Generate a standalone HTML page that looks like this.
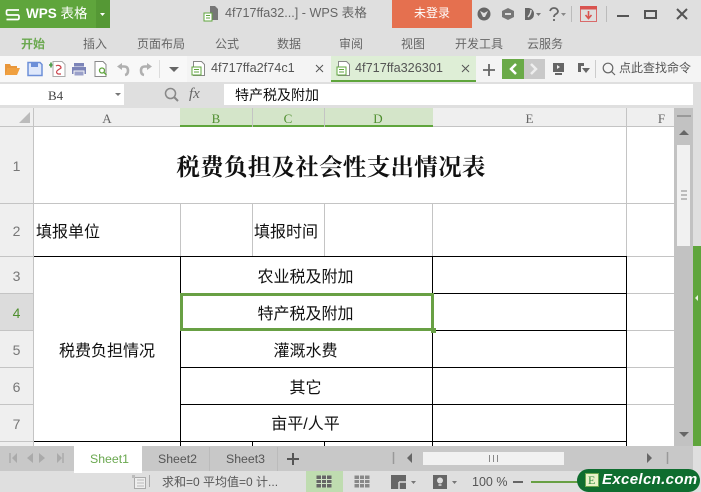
<!DOCTYPE html>
<html><head><meta charset="utf-8"><style>
html,body{margin:0;padding:0}
#p{position:relative;width:701px;height:492px;overflow:hidden;background:#dfdfdf;font-family:"Liberation Sans","Noto Sans CJK SC",sans-serif;font-size:12px;color:#555}
#p div{position:absolute}
.t{white-space:nowrap;line-height:1}
.s{white-space:nowrap;line-height:1;font-size:16px;color:#111;font-family:"Liberation Sans","WenQuanYi Zen Hei",sans-serif}
.h{white-space:nowrap;line-height:1;text-align:center;font-size:13px;color:#666;font-family:"Liberation Serif",serif}
.n{white-space:nowrap;line-height:1;text-align:center;font-size:14px;color:#777;left:0;width:33px}
svg{position:absolute;overflow:visible}
.k{background:#000}.g{background:#c4c4c4}
</style></head><body><div id="p">
<!-- title bar -->
<div style="left:0;top:0;width:96px;height:28px;background:#5fa53c"></div>
<div style="left:96px;top:0;width:14px;height:28px;background:#559835"></div>
<svg style="left:0;top:0" width="110" height="28"><path d="M19 10H8Q6.500 10 6.500 11.500V13.500Q6.500 15 8 15H17.500Q19 15 19 16.500V18Q19 19.500 17.500 19.500H6.500" fill="none" stroke="#fff" stroke-width="1.700"/><path d="M100 13h5l-2.500 3z" fill="#fff"/></svg>
<div class="t" style="left:26px;top:7px;font-size:13.500px;color:#fff;font-weight:bold">WPS <span style="font-weight:normal">表格</span></div>
<svg style="left:203px;top:5px" width="16" height="17"><path d="M7 1h5l3 3v11H7z" fill="#777"/><rect x="1" y="8" width="8" height="8" fill="#fff" stroke="#5fa53c"/><path d="M3 10.500h4M3 13h4" stroke="#5fa53c"/></svg>
<div class="t" style="left:225px;top:7px;font-size:12.600px;color:#666">4f717ffa32...] - WPS 表格</div>
<div style="left:392px;top:0;width:80px;height:28px;background:#e5704f"></div>
<div class="t" style="left:414px;top:7px;font-size:12px;color:#fff">未登录</div>
<svg style="left:470px;top:0" width="231" height="28"><circle cx="14" cy="14" r="6.500" fill="#666"/><path d="M10 11l4 2 4-2-3 6h-2z" fill="#ddd"/><path d="M38 8l6 3v6l-6 3-6-3v-6z" fill="#777"/><path d="M35 14h6" stroke="#ddd" stroke-width="2"/><path d="M55 8h4q5 1 5 6t-5 6h-4z" fill="#666"/><path d="M58 17q3-3 3-7" stroke="#ddd" fill="none" stroke-width="1.500"/><path d="M66 13h5l-2.500 3z" fill="#777"/><path d="M80 11q1-3 4-3t4 3q0 2-2 3t-2 3M84 19v2" fill="none" stroke="#666" stroke-width="1.800"/><path d="M91 13h5l-2.500 3z" fill="#888"/><path d="M101.500 6v16M136.500 6v16" stroke="#bbb"/><rect x="110.500" y="6.500" width="16" height="15" fill="none" stroke="#d96a6a"/><rect x="110" y="6" width="17" height="3.500" fill="#d9534f"/><path d="M118.500 11v7M115.500 15l3 3.500 3-3.500" fill="none" stroke="#d9534f" stroke-width="1.600"/><path d="M147 16h12" stroke="#555" stroke-width="2"/><rect x="175" y="11" width="11" height="7" fill="none" stroke="#555" stroke-width="2"/><path d="M207 9l10 10M217 9l-10 10" stroke="#555" stroke-width="2"/></svg>
<!-- menu -->
<div class="t" style="left:21px;top:38px;color:#6aa84f;font-weight:bold">开始</div>
<div class="t" style="left:83px;top:38px;color:#666">插入</div>
<div class="t" style="left:137px;top:38px;color:#666">页面布局</div>
<div class="t" style="left:215px;top:38px;color:#666">公式</div>
<div class="t" style="left:277px;top:38px;color:#666">数据</div>
<div class="t" style="left:339px;top:38px;color:#666">审阅</div>
<div class="t" style="left:401px;top:38px;color:#666">视图</div>
<div class="t" style="left:455px;top:38px;color:#666">开发工具</div>
<div class="t" style="left:527px;top:38px;color:#666">云服务</div>
<!-- toolbar -->
<div style="left:0;top:56px;width:701px;height:26px;background:#f4f4f4"></div>
<div style="left:0;top:56px;width:187px;height:26px;background:#f8f8f8"></div>
<svg style="left:0;top:56px" width="187" height="26"><path d="M5 8h5l1 2h6v2H8l-3 8z" fill="#e8963a"/><path d="M8 12h12l-3 7H5z" fill="#f0a040"/><path d="M28 6.500h12l2 2v11H28z" fill="#dfe8fb" stroke="#6d8fd8" stroke-width="1.500"/><rect x="31" y="7" width="7" height="4" fill="#6d8fd8"/><path d="M49 9h5M51 6.500v5" stroke="#4a9a45" stroke-width="1.600"/><path d="M53 5.500h9l3 3v12H53z" fill="#fff" stroke="#aaa"/><path d="M56 10a3 2.500 0 0 1 5 2l-3 2q-3 2 0 4h3" fill="none" stroke="#c9424a" stroke-width="1.200"/><rect x="72" y="11" width="14" height="7" fill="#7c84b8"/><rect x="74" y="7" width="10" height="3.500" fill="#7c84b8"/><rect x="74" y="15" width="10" height="5" fill="#9aa0c9" stroke="#f8f8f8"/><path d="M95 5.500h8l3 3v12H95z" fill="#fff" stroke="#888"/><circle cx="102" cy="14.500" r="2.500" fill="none" stroke="#5fa53c" stroke-width="1.300"/><path d="M104 16.500l2.500 2.500" stroke="#5fa53c" stroke-width="1.300"/><path d="M119 10.500h5q4 0 4 4T125 19" fill="none" stroke="#b0b0b0" stroke-width="2.600"/><path d="M122 7l-5 3.500 5 3.500z" fill="#b0b0b0"/><path d="M150 10.500h-5q-4 0-4 4t3 4.500" fill="none" stroke="#b0b0b0" stroke-width="2.600"/><path d="M147 7l5 3.500-5 3.500z" fill="#b0b0b0"/><path d="M159.500 4v18" stroke="#ddd"/><path d="M169 11h10l-5 5z" fill="#666"/></svg>
<svg style="left:191px;top:60px" width="16" height="17"><path d="M2.500 1.500h8l3 3v11h-11z" fill="#fff" stroke="#888"/><rect x="1" y="7" width="9" height="8" fill="#fff" stroke="#5fa53c"/><path d="M3 9.500h5M3 12h5" stroke="#5fa53c"/></svg>
<div class="t" style="left:211px;top:62px;font-size:12.700px;color:#555">4f717ffa2f74c1</div>
<svg style="left:315px;top:64px" width="10" height="10"><path d="M1 1l7 7M8 1l-7 7" stroke="#555"/></svg>
<div style="left:331px;top:56px;width:145px;height:26px;background:#deeed6"></div>
<div style="left:331px;top:80px;width:145px;height:2px;background:#5fa53c"></div>
<svg style="left:336px;top:60px" width="16" height="17"><path d="M2.500 1.500h8l3 3v11h-11z" fill="#fff" stroke="#888"/><rect x="1" y="7" width="9" height="8" fill="#fff" stroke="#5fa53c"/><path d="M3 9.500h5M3 12h5" stroke="#5fa53c"/></svg>
<div class="t" style="left:355px;top:62px;font-size:12.700px;color:#555">4f717ffa326301</div>
<svg style="left:461px;top:64px" width="10" height="10"><path d="M1 1l7 7M8 1l-7 7" stroke="#555"/></svg>
<svg style="left:476px;top:56px" width="225" height="26"><path d="M7 14h12M13 8v12" stroke="#666" stroke-width="1.800"/><rect x="26" y="3" width="22" height="20" fill="#6aaa48"/><rect x="48" y="3" width="21" height="20" fill="#c9c9c9"/><path d="M40 8l-5 5 5 5" fill="none" stroke="#fff" stroke-width="2.500"/><path d="M55 8l5 5-5 5" fill="none" stroke="#eee" stroke-width="2.500"/><rect x="77" y="7" width="11" height="9" fill="#666"/><path d="M81 9l3 2-3 2z" fill="#eee"/><path d="M79 18h7" stroke="#666" stroke-width="2"/><path d="M102 7h6v3h-3v6h-3z" fill="#666"/><path d="M106 12h8l-4 5z" fill="#666"/><path d="M119.500 4v18" stroke="#ccc"/><circle cx="132" cy="12" r="4.800" fill="none" stroke="#666" stroke-width="1.200"/><path d="M135.500 15.500l3.500 3.500" stroke="#666" stroke-width="1.200"/></svg>
<div class="t" style="left:619px;top:62px;font-size:12px;color:#555">点此查找命令</div>
<!-- formula bar -->
<div style="left:0;top:84px;width:124px;height:21px;background:#fff"></div>
<div class="t" style="left:48px;top:89px;font-size:13px;color:#444;font-family:'Liberation Serif',serif">B4</div>
<svg style="left:115px;top:93px" width="7" height="5"><path d="M0 0h6l-3 3z" fill="#777"/></svg>
<svg style="left:164px;top:87px" width="16" height="16"><circle cx="6.500" cy="6.500" r="5" fill="none" stroke="#888" stroke-width="1.500"/><path d="M10 10l4 4" stroke="#888" stroke-width="2"/></svg>
<div class="t" style="left:189px;top:87px;font-size:15px;font-style:italic;color:#666;font-family:'Liberation Serif',serif">fx</div>
<div style="left:224px;top:84px;width:469px;height:21px;background:#fff"></div>
<div class="s" style="left:235px;top:88px;font-size:14px">特产税及附加</div>
<!-- sheet -->
<div style="left:0;top:108px;width:674px;height:338px;background:#fff"></div>
<div style="left:0;top:108px;width:674px;height:19px;background:#efefef"></div>
<div style="left:0;top:108px;width:33px;height:338px;background:#efefef"></div>
<div style="left:180px;top:108px;width:253px;height:19px;background:#d4e5c9"></div>
<div style="left:0;top:293px;width:33px;height:37px;background:#dcdcdc"></div>
<div class="g" style="left:0;top:126px;width:674px;height:1px"></div>
<div style="left:180px;top:125px;width:253px;height:2px;background:#5fa53c"></div>
<div class="g" style="left:33px;top:108px;width:1px;height:338px"></div>
<div class="g" style="left:252px;top:108px;width:1px;height:19px"></div>
<div class="g" style="left:324px;top:108px;width:1px;height:19px"></div>
<div class="g" style="left:626px;top:108px;width:1px;height:149px"></div>
<div class="g" style="left:34px;top:203px;width:640px;height:1px"></div>
<div class="g" style="left:180px;top:204px;width:1px;height:52px"></div>
<div class="g" style="left:252px;top:204px;width:1px;height:52px"></div>
<div class="g" style="left:324px;top:204px;width:1px;height:52px"></div>
<div class="g" style="left:432px;top:204px;width:1px;height:52px"></div>
<div class="g" style="left:627px;top:256px;width:47px;height:1px"></div>
<div class="g" style="left:627px;top:293px;width:47px;height:1px"></div>
<div class="g" style="left:627px;top:330px;width:47px;height:1px"></div>
<div class="g" style="left:627px;top:367px;width:47px;height:1px"></div>
<div class="g" style="left:627px;top:404px;width:47px;height:1px"></div>
<div class="g" style="left:0;top:203px;width:33px;height:1px"></div>
<div class="g" style="left:0;top:256px;width:33px;height:1px"></div>
<div class="g" style="left:0;top:293px;width:33px;height:1px"></div>
<div class="g" style="left:0;top:330px;width:33px;height:1px"></div>
<div class="g" style="left:0;top:367px;width:33px;height:1px"></div>
<div class="g" style="left:0;top:404px;width:33px;height:1px"></div>
<div class="g" style="left:0;top:441px;width:33px;height:1px"></div>
<svg style="left:19px;top:112px" width="12" height="12"><path d="M11 0v11H0z" fill="#bbb"/></svg>
<!-- black borders -->
<div class="k" style="left:34px;top:256px;width:593px;height:1px"></div>
<div class="k" style="left:180px;top:293px;width:447px;height:1px"></div>
<div class="k" style="left:180px;top:330px;width:447px;height:1px"></div>
<div class="k" style="left:180px;top:367px;width:447px;height:1px"></div>
<div class="k" style="left:180px;top:404px;width:447px;height:1px"></div>
<div class="k" style="left:34px;top:441px;width:593px;height:1px"></div>
<div class="k" style="left:180px;top:256px;width:1px;height:190px"></div>
<div class="k" style="left:432px;top:256px;width:1px;height:190px"></div>
<div class="k" style="left:626px;top:256px;width:1px;height:190px"></div>
<div class="k" style="left:252px;top:441px;width:1px;height:5px"></div>
<div class="k" style="left:324px;top:441px;width:1px;height:5px"></div>
<!-- headers -->
<div class="h" style="left:34px;top:112px;width:146px">A</div>
<div class="h" style="left:180px;top:112px;width:72px;color:#4f8f2f">B</div>
<div class="h" style="left:252px;top:112px;width:72px;color:#4f8f2f">C</div>
<div class="h" style="left:324px;top:112px;width:108px;color:#4f8f2f">D</div>
<div class="h" style="left:433px;top:112px;width:193px">E</div>
<div class="h" style="left:627px;top:112px;width:69px">F</div>
<div class="n" style="top:159px">1</div>
<div class="n" style="top:224px">2</div>
<div class="n" style="top:269px">3</div>
<div class="n" style="top:306px;color:#4f8f2f">4</div>
<div class="n" style="top:343px">5</div>
<div class="n" style="top:380px">6</div>
<div class="n" style="top:417px">7</div>
<!-- cells -->
<div class="t" style="left:34px;top:154px;width:594px;text-align:center;font-size:23.500px;font-weight:bold;color:#111;font-family:'Noto Serif CJK SC','Liberation Serif',serif;letter-spacing:.3px">税费负担及社会性支出情况表</div>
<div class="s" style="left:36px;top:225px">填报单位</div>
<div class="s" style="left:254px;top:225px">填报时间</div>
<div class="s" style="left:34px;top:344px;width:146px;text-align:center">税费负担情况</div>
<div class="s" style="left:181px;top:270px;width:249px;text-align:center">农业税及附加</div>
<div class="s" style="left:181px;top:307px;width:249px;text-align:center">特产税及附加</div>
<div class="s" style="left:181px;top:344px;width:249px;text-align:center">灌溉水费</div>
<div class="s" style="left:181px;top:381px;width:249px;text-align:center">其它</div>
<div class="s" style="left:181px;top:417px;width:249px;text-align:center">亩平/人平</div>
<!-- selection -->
<div style="left:180px;top:293px;width:248px;height:32px;border:3px solid #68a044"></div>
<div style="left:431px;top:328px;width:5px;height:5px;background:#68a044"></div>
<!-- scrollbar -->
<div style="left:674px;top:108px;width:19px;height:338px;background:#c2c2c2"></div>
<div style="left:677px;top:145px;width:13px;height:101px;background:#f1f1f1"></div>
<div style="left:677px;top:115px;width:14px;height:2px;background:#999"></div>
<svg style="left:674px;top:126px" width="19" height="320"><path d="M5 9h10l-5-5z" fill="#666"/><path d="M5 306h10l-5 5z" fill="#666"/><path d="M7 65h6M7 69h6M7 73h6" stroke="#888"/></svg>
<div style="left:693px;top:105px;width:8px;height:141px;background:#dfdfdf"></div>
<div style="left:693px;top:246px;width:8px;height:200px;background:#5fa53c"></div>
<svg style="left:694px;top:294px" width="6" height="8"><path d="M4 1v6L1 4z" fill="#e8f2e0"/></svg>
<!-- tabs -->
<div style="left:0;top:446px;width:693px;height:25px;background:#c8c8c8"></div>
<svg style="left:0;top:446px" width="70" height="25"><path d="M10 7v10" stroke="#aaa" stroke-width="1.500"/><path d="M17 7l-5 5 5 5zM33 7l-6 5 6 5z" fill="#aaa"/><path d="M39 7l6 5-6 5zM57 7l5 5-5 5z" fill="#aaa"/><path d="M63 7v10" stroke="#aaa" stroke-width="1.500"/></svg>
<div style="left:74px;top:446px;width:68px;height:25px;background:#fff"></div>
<div class="t" style="left:90px;top:453px;font-size:12.300px;color:#6aa84f">Sheet1</div>
<div class="t" style="left:158px;top:453px;font-size:12.300px;color:#555">Sheet2</div>
<div class="t" style="left:226px;top:453px;font-size:12.300px;color:#555">Sheet3</div>
<div style="left:209px;top:447px;width:1px;height:24px;background:#bbb"></div>
<div style="left:277px;top:447px;width:1px;height:24px;background:#bbb"></div>
<svg style="left:286px;top:452px" width="14" height="14"><path d="M1 7h12M7 1v12" stroke="#555" stroke-width="2"/></svg>
<svg style="left:390px;top:446px" width="303" height="25"><path d="M3.500 6v12M277.500 6v12" stroke="#999" stroke-width="1.500"/><path d="M22 7v10l-5-5zM257 7v10l5-5z" fill="#666"/></svg>
<div style="left:423px;top:452px;width:141px;height:13px;background:#f1f1f1"></div>
<svg style="left:390px;top:446px" width="303" height="25"><path d="M99.500 9v7M103.500 9v7M107.500 9v7" stroke="#888"/></svg>
<!-- status -->
<div style="left:74px;top:471px;width:68px;height:2px;background:#fff"></div>
<svg style="left:131px;top:474px" width="20" height="16"><rect x="3.500" y="3.500" width="11" height="11" fill="#eee" stroke="#aaa"/><path d="M6 6h7M6 9h7M6 12h7" stroke="#bbb"/><path d="M1 1h3v3H1z" fill="#bbb"/></svg>
<div style="left:149px;top:475px;width:1px;height:12px;background:#aaa"></div>
<div class="t" style="left:162px;top:476px;font-size:12px;color:#555">求和=0 平均值=0 计...</div>
<div style="left:306px;top:471px;width:37px;height:21px;background:#bfdcb0"></div>
<svg style="left:316px;top:475px" width="17" height="13"><rect x=".5" y=".5" width="15" height="12" fill="#666"/><path d="M0 4.500h16M0 8.500h16M5.500 0v13M10.500 0v13" stroke="#cfe3c4"/></svg>
<svg style="left:354px;top:475px" width="17" height="13"><rect x=".5" y=".5" width="15" height="12" fill="#888"/><path d="M0 4.500h16M0 8.500h16M5.500 0v13M10.500 0v13" stroke="#ddd"/></svg>
<svg style="left:390px;top:474px" width="100" height="16"><path d="M1 1h15v14H1z" fill="#666"/><path d="M9 8v7M9 8h7" stroke="#ddd" stroke-width="1.500"/><path d="M21 7h5l-2.500 3z" fill="#777"/><rect x="43" y="1" width="14" height="14" fill="#666"/><circle cx="50" cy="6.500" r="3" fill="#ddd"/><path d="M48.500 11h3" stroke="#ddd" stroke-width="1.500"/><path d="M62 7h5l-2.500 3z" fill="#777"/></svg>
<div class="t" style="left:472px;top:476px;font-size:12.500px;color:#555">100 %</div>
<div style="left:513px;top:481px;width:10px;height:2px;background:#666"></div>
<div style="left:531px;top:481px;width:50px;height:2px;background:#68a044"></div>
<!-- logo -->
<div style="left:577px;top:469px;width:123px;height:23px;background:#0f6d2f;border-radius:12px"></div>
<div style="left:585px;top:473px;width:14px;height:14px;background:#e9f2c9;border:1px solid #6aa84f;box-sizing:border-box"></div>
<div class="t" style="left:588px;top:474px;font-size:12px;color:#2e8b3d;font-family:'Liberation Serif',serif">E</div>
<div class="t" style="left:602px;top:472px;font-size:15px;font-weight:bold;font-style:italic;color:#fff;letter-spacing:.35px">Excelcn.com</div>
</div></body></html>
